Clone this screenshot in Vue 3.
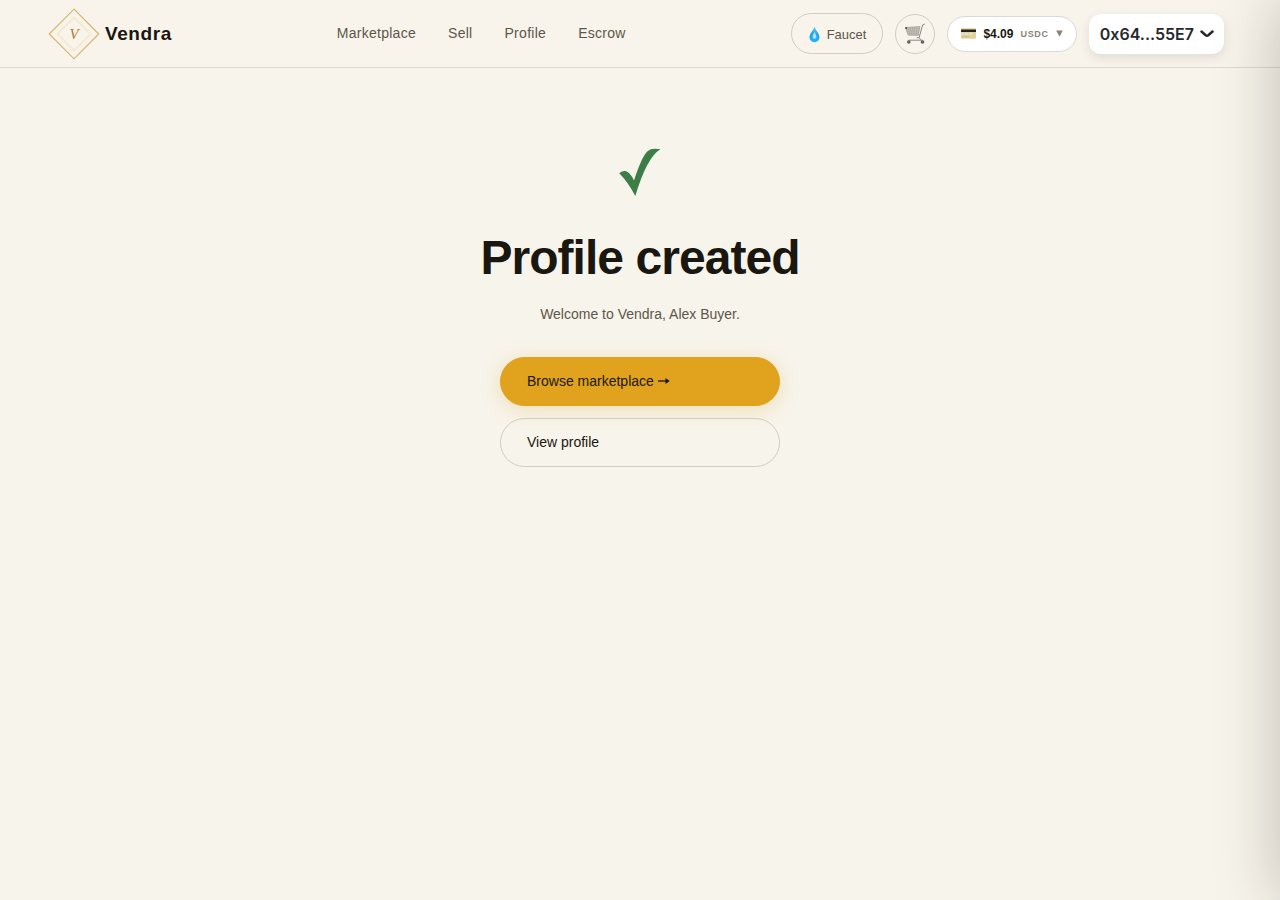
<script setup>
const links = ['Marketplace', 'Sell', 'Profile', 'Escrow']
</script>

<template>
  <div class="page">
    <header class="bar">
      <a class="brand" href="#">
        <svg class="mark" viewBox="0 0 52 52" aria-hidden="true">
          <path d="M26 1.2 50.8 26 26 50.8 1.2 26Z" fill="none" stroke="#d9b063" stroke-width="1.1" />
          <path d="M26 9.5 42.5 26 26 42.5 9.5 26Z" fill="none" stroke="#f6e8c6" stroke-width="1.5" />
          <text x="26" y="31" text-anchor="middle">V</text>
        </svg>
        <span>Vendra</span>
      </a>
      <nav class="nav" aria-label="Main">
        <a v-for="link in links" :key="link" href="#">{{ link }}</a>
      </nav>
      <div class="tools">
        <button class="faucet" type="button">
          <svg class="drop" viewBox="0 0 12 17" aria-hidden="true">
            <defs>
              <linearGradient id="water" x1="0" y1="0" x2="0" y2="1">
                <stop offset="0" stop-color="#72c4ee" />
                <stop offset="0.5" stop-color="#1ea0ee" />
                <stop offset="1" stop-color="#1fb4fa" />
              </linearGradient>
            </defs>
            <path d="M6 .5C5.200 4 1 7.500 1 11.300a5 5 0 0 0 10 0C11 7.500 6.800 4 6 .5Z" fill="url(#water)" />
            <path d="M6 5.500C5.500 7.500 4 8.800 4 10.800c.1 1.400 1 2 2 2s2-.6 2-2C8 8.800 6.500 7.500 6 5.500Z" fill="#a9e2fc" />
          </svg>
          Faucet
        </button>
        <button class="cart" type="button" aria-label="Cart">
          <svg viewBox="0 0 22 22" fill="none" aria-hidden="true">
            <path d="M1.500 4.500 15.800 3.600 14.300 12.400 4.200 12.100Z" fill="#c9c6c0" stroke="#96938e" stroke-width=".7" />
            <path d="M4 4.400 6 12M6.200 4.300 7.600 12M8.400 4.100 9.300 12.200M10.700 4 11 12.200M13 3.800 12.700 12.300M2.100 6.400l13.300-.8M2.800 8.400l12.300-.5M3.500 10.300l11.200-.1" stroke="#a09d98" stroke-width=".5" />
            <path d="M20.800 1 18.600 2 15.100 14.500 16.700 16.700M4.500 17.200H18.700M12.700 14.900l2.400-.4" stroke="#8a8782" stroke-width="1" />
            <circle cx="2.100" cy="5" r="1" fill="#4c4a48" />
            <circle cx="4.800" cy="19" r="1.800" fill="#5c5957" /><circle cx="18.500" cy="19" r="1.800" fill="#5c5957" />
            <circle cx="4.800" cy="19" r=".5" fill="#999" /><circle cx="18.500" cy="19" r=".5" fill="#999" />
          </svg>
        </button>
        <button class="balance" type="button">
          <svg class="card" viewBox="0 0 15 11" aria-hidden="true">
            <rect y=".3" width="15" height="10.400" rx="1" fill="#e0d39b" />
            <rect y="1.500" width="15" height="2.500" fill="#25221c" />
            <rect x="1" y="5" width="10" height="2" fill="#eeeade" />
            <path d="M2 6.100h8" stroke="#a7a7a0" stroke-width=".6" stroke-dasharray="2 .6" />
            <rect x="1" y="8" width="7" height="1" fill="#cabd80" />
          </svg>
          <strong>$4.09</strong>
          <span class="unit">USDC</span>
          <svg class="caret" viewBox="0 0 7 7" aria-hidden="true"><path d="M.2.5H6.800L3.500 6.700Z" fill="#8a8474" /></svg>
        </button>
        <button class="account" type="button">
          0x64...55E7
          <svg viewBox="0 0 14 8" aria-hidden="true"><path d="M1.500 1.500 5.700 5.300Q7 6.300 8.300 5.300L12.500 1.500" fill="none" stroke="#25292e" stroke-width="2.500" stroke-linecap="round" /></svg>
        </button>
      </div>
    </header>

    <main class="done">
      <svg class="tick" viewBox="0 0 42 48" aria-hidden="true">
        <path d="M.2 25.300Q3.500 22.500 6.500 23Q11 24 15 32.500Q22.500 9 28.500 3.200Q32.500-.4 41.400 1.300Q28 9 16.300 48Q9 34 .2 25.300Z" fill="#3d7d47" />
      </svg>
      <h1>Profile created</h1>
      <p>Welcome to Vendra, Alex Buyer.</p>
      <div class="actions">
        <a class="action primary" href="#">
          Browse marketplace
          <svg viewBox="0 0 12 8" aria-hidden="true"><path d="M0 4H9" stroke="#1a1710" stroke-width="1.300" /><path d="M7.500 1 11.700 4 7.500 7Z" fill="#1a1710" /></svg>
        </a>
        <a class="action" href="#">View profile</a>
      </div>
    </main>
    <aside class="drawer" aria-hidden="true"></aside>
  </div>
</template>

<style>
body {
  margin: 0;
  background: #f7f4eb;
}
</style>

<style scoped>
.page {
  min-height: 100vh;
  color: #1a1710;
  font-family: "Liberation Sans", Arial, sans-serif;
  font-size: 14px;
}
a {
  color: inherit;
  text-decoration: none;
}
button {
  box-sizing: border-box;
  display: flex;
  align-items: center;
  font-family: inherit;
  color: inherit;
  cursor: pointer;
}
svg {
  display: block;
  flex: none;
}
.bar {
  box-sizing: border-box;
  height: 68px;
  padding: 0 56px 0 48px;
  display: flex;
  align-items: center;
  justify-content: space-between;
  background: #f8f3eb;
  border-bottom: 1px solid #dcd9d0;
}
.brand {
  display: flex;
  align-items: center;
  gap: 5px;
  font-size: 19px;
  font-weight: 700;
  letter-spacing: 0.03em;
}
.mark {
  width: 52px;
  height: 52px;
}
.mark text {
  font: italic 15px "Liberation Serif", serif;
  letter-spacing: 0;
  fill: #b07c1c;
}
.nav {
  display: flex;
  gap: 32px;
  padding-bottom: 2px;
  color: #5c574a;
  letter-spacing: 0.02em;
}
.tools {
  display: flex;
  align-items: center;
  gap: 12px;
}
.faucet {
  height: 41px;
  padding: 1px 16px 0;
  gap: 6px;
  border: 1px solid #d0ccc3;
  border-radius: 24px;
  background: transparent;
  color: #5c574a;
  font-size: 13px;
}
.drop {
  width: 13px;
  height: 17px;
}
.cart {
  width: 40px;
  height: 40px;
  padding: 0;
  justify-content: center;
  border: 1px solid #d0ccc3;
  border-radius: 50%;
  background: transparent;
}
.cart svg {
  width: 22px;
  height: 22px;
}
.balance {
  height: 36px;
  padding: 0 13px;
  gap: 7px;
  border: 1px solid #dbd9d5;
  border-radius: 18px;
  background: #fff;
  font-size: 12px;
}
.card {
  width: 15px;
  height: 11px;
}
.unit {
  color: #8a8474;
  font-size: 9px;
  font-weight: 700;
  letter-spacing: 0.08em;
}
.caret {
  width: 7px;
  height: 7px;
}
.account {
  height: 40px;
  padding: 0 10px 0 11px;
  gap: 6px;
  border: 0;
  border-radius: 12px;
  background: #fff;
  box-shadow: 0 4px 12px rgba(0, 0, 0, 0.1);
  color: #25292e;
  font-family: Inter, sans-serif;
  font-size: 16px;
  font-weight: 600;
}
.account svg {
  width: 14px;
  height: 8px;
}
.done {
  padding: 80px 24px;
  display: flex;
  flex-direction: column;
  align-items: center;
}
.tick {
  width: 42px;
  height: 48px;
}
h1 {
  margin: 34px 0 0;
  font-size: 48px;
  line-height: 56px;
  letter-spacing: -0.02em;
}
p {
  margin: 18px 0 0;
  color: #5c574a;
  line-height: 20px;
}
.actions {
  margin-top: 33px;
  width: 100%;
  max-width: 280px;
  display: grid;
  gap: 12px;
}
.action {
  box-sizing: border-box;
  height: 49px;
  padding: 0 26px 2px;
  display: flex;
  align-items: center;
  gap: 4px;
  border: 1px solid #d0ccc3;
  border-radius: 25px;
}
.primary {
  border-color: #e1a31d;
  background: #e1a31d;
  box-shadow: 0 4px 20px rgba(225, 163, 29, 0.25);
}
.action svg {
  width: 12px;
  height: 8px;
}
.drawer {
  position: fixed;
  top: 0;
  bottom: 0;
  left: 100%;
  width: 400px;
  box-shadow: 0 0 60px rgba(26, 23, 16, 0.25);
}
</style>
